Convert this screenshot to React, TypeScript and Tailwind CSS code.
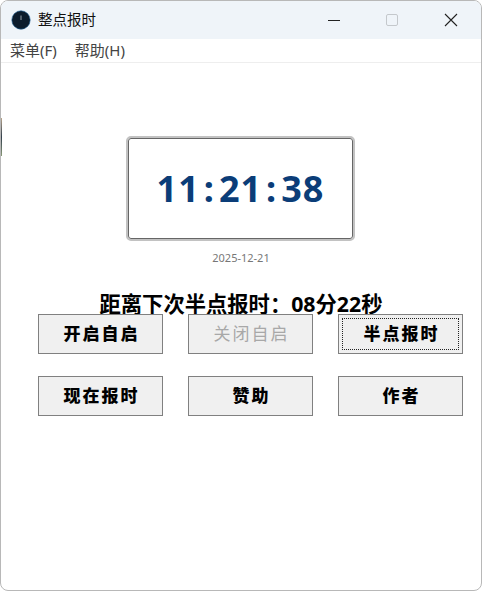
const SANS = 'font-["Noto_Sans","Noto_Sans_CJK_SC",sans-serif]';

function ClockIcon() {
  return (
    <svg width="20" height="20" viewBox="0 0 20 20" className="shrink-0">
      <circle cx="10" cy="10" r="9.2" fill="#0c1c2c" stroke="#1c5f96" strokeWidth="0.6" />
      <path d="M10 5.5V10" stroke="#9aa3ab" strokeWidth="1" />
    </svg>
  );
}

function TitleBar() {
  return (
    <div className="flex h-[38px] items-center bg-[#eff4f9] pb-[1px] pl-[10px]">
      <ClockIcon />
      <span className="ml-[7px] text-[14.5px] leading-none text-[#111]">整点报时</span>
      <div className="ml-auto flex items-center">
        <svg width="14" height="14" viewBox="0 0 14 14" className="mr-[44px]">
          <path d="M1 7.5H13" stroke="#222" strokeWidth="1" />
        </svg>
        <svg width="14" height="14" viewBox="0 0 14 14" className="mr-[45px]">
          <rect x="1.5" y="1.5" width="11" height="11" rx="1.5" fill="none" stroke="#c4c8cc" strokeWidth="1" />
        </svg>
        <svg width="14" height="14" viewBox="0 0 14 14" className="mr-[23px]">
          <path d="M1 1L13 13M13 1L1 13" stroke="#222" strokeWidth="1.1" />
        </svg>
      </div>
    </div>
  );
}

function MenuBar() {
  return (
    <div className="flex h-[24px] items-center gap-[18px] border-b border-[#eeeeee] bg-white pl-[9px] text-[15px] leading-none text-[#444]">
      <span>菜单(F)</span>
      <span>帮助(H)</span>
    </div>
  );
}

function Btn({ label, disabled, focused }: { label: string; disabled?: boolean; focused?: boolean }) {
  return (
    <button
      className={`relative flex h-[40px] items-center justify-center border border-[#808080] bg-[#f0f0f0] pl-[2px] text-[17px] tracking-[2px] ${
        disabled ? 'font-normal text-[#a8a8a8]' : 'font-black text-black'
      }`}
    >
      {focused && <span className="absolute inset-[3px] border border-dotted border-[#222]" />}
      {label}
    </button>
  );
}

export default function App() {
  return (
    <div className={`${SANS} relative h-[591px] w-[482px] overflow-hidden rounded-[8px] border border-[#b8b8b8] bg-white`}>
      <TitleBar />
      <MenuBar />

      <div className="ml-[125px] mt-[73px] w-[229px] rounded-[5px] border-2 border-[#c2c2c2]">
        <div className="flex h-[101px] items-center justify-center rounded-[3px] border border-[#666] bg-white">
          <span className="text-[36px] font-bold leading-none tracking-[1px] text-[#0b3d78]">
            11<span className="mx-[4px]">:</span>21<span className="mx-[4px]">:</span>38
          </span>
        </div>
      </div>

      <div className="mt-[9px] h-[15px] text-center text-[11px] leading-[15px] text-[#777]">2025-12-21</div>

      <div className="mt-[28px] h-[21px] text-center text-[21.3px] font-bold leading-[21px] text-black">
        距离下次半点报时：08分22秒
      </div>

      <div className="ml-[37px] grid w-[425px] grid-cols-3 gap-x-[25px] gap-y-[22px]">
        <Btn label="开启自启" />
        <Btn label="关闭自启" disabled />
        <Btn label="半点报时" focused />
        <Btn label="现在报时" />
        <Btn label="赞助" />
        <Btn label="作者" />
      </div>

      {/* sliver of whatever sat behind the window */}
      <div className="absolute left-[-1px] top-[117px] h-[38px] w-[2px] bg-gradient-to-b from-[#b9a58c] via-[#33404c] to-[#8b9a78]" />
    </div>
  );
}
